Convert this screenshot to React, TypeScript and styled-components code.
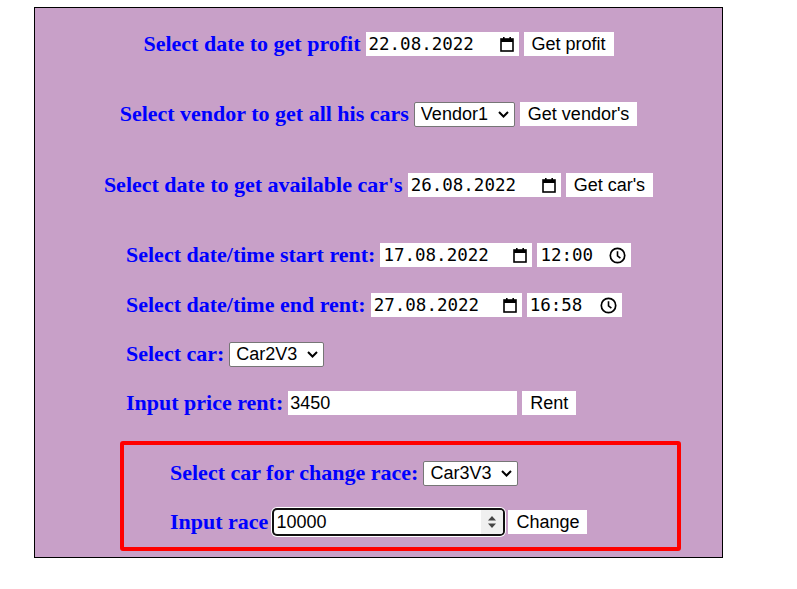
import styled, { createGlobalStyle } from "styled-components";

const GlobalStyle = createGlobalStyle`
  body {
    margin: 0;
    font-family: "Liberation Sans", Arial, sans-serif;
  }
`;

const CalendarIcon = () => (
  <IconSvg width="14" height="16" viewBox="0 0 14 16" fill="none">
    <rect x="1" y="3" width="12" height="12" stroke="#000" strokeWidth="1.6" />
    <rect x="1" y="3" width="12" height="3" fill="#000" />
    <rect x="3" y="1" width="1.6" height="3" fill="#000" />
    <rect x="9.4" y="1" width="1.6" height="3" fill="#000" />
  </IconSvg>
);

const ClockIcon = () => (
  <IconSvg width="17" height="17" viewBox="0 0 17 17" fill="none">
    <circle cx="8.5" cy="8.5" r="7.2" stroke="#000" strokeWidth="1.7" />
    <path d="M8.5 4.2V8.8L11.4 11.2" stroke="#000" strokeWidth="1.6" />
  </IconSvg>
);

const Chevron = () => (
  <svg width="11" height="7" viewBox="0 0 11 7" fill="none">
    <path d="M1 1L5.5 5.5L10 1" stroke="#000" strokeWidth="2" />
  </svg>
);

const SpinArrows = () => (
  <svg width="10" height="14" viewBox="0 0 10 14">
    <path d="M5 1L9 5.5H1Z" fill="#444" />
    <path d="M5 13L9 8.5H1Z" fill="#444" />
  </svg>
);

interface DateFieldProps {
  value: string;
  width: number;
  kind?: "date" | "time";
}

const DateField: React.FC<DateFieldProps> = ({ value, width, kind = "date" }) => (
  <FieldBox $width={width}>
    <MonoInput type="text" defaultValue={value} />
    {kind === "date" ? <CalendarIcon /> : <ClockIcon />}
  </FieldBox>
);

interface SelectProps {
  options: string[];
  width: number;
}

const Select: React.FC<SelectProps> = ({ options, width }) => (
  <SelectWrap $width={width}>
    <NativeSelect defaultValue={options[0]}>
      {options.map((o) => (
        <option key={o}>{o}</option>
      ))}
    </NativeSelect>
    <ChevronSpot>
      <Chevron />
    </ChevronSpot>
  </SelectWrap>
);

const App = () => {
  return (
    <>
      <GlobalStyle />
      <Page>
        <Panel>
          <Row $center>
            <Label>Select date to get profit</Label>
            <DateField value="22.08.2022" width={153} />
            <Button>Get profit</Button>
          </Row>
          <Row $center $space={44}>
            <Label>Select vendor to get all his cars</Label>
            <Select options={["Vendor1", "Vendor2", "Vendor3"]} width={101} />
            <Button>Get vendor's</Button>
          </Row>
          <Row $center $space={45}>
            <Label>Select date to get available car's</Label>
            <DateField value="26.08.2022" width={153} />
            <Button>Get car's</Button>
          </Row>

          <Row $space={44}>
            <Label>Select date/time start rent:</Label>
            <DateField value="17.08.2022" width={152} />
            <DateField value="12:00" width={94} kind="time" />
          </Row>
          <Row $space={24}>
            <Label>Select date/time end rent:</Label>
            <DateField value="27.08.2022" width={151} />
            <DateField value="16:58" width={95} kind="time" />
          </Row>
          <Row $space={23}>
            <Label>Select car:</Label>
            <Select options={["Car2V3", "Car1V1", "Car3V3"]} width={95} />
          </Row>
          <Row $space={23}>
            <Label>Input price rent:</Label>
            <TextInput type="text" defaultValue="3450" $width={229} />
            <Button>Rent</Button>
          </Row>

          <ChangeBox>
            <InnerRow>
              <Label>Select car for change race:</Label>
              <Select options={["Car3V3", "Car1V1", "Car2V3"]} width={95} />
            </InnerRow>
            <InnerRow $space={23}>
              <Label>Input race</Label>
              <NumberWrap>
                <NumberInput type="number" defaultValue={10000} />
                <SpinBox>
                  <SpinArrows />
                </SpinBox>
              </NumberWrap>
              <Button>Change</Button>
            </InnerRow>
          </ChangeBox>
        </Panel>
      </Page>
    </>
  );
};

export default App;

const Page = styled.div`
  padding: 7px 0 0 34px;
`;

const Panel = styled.div`
  width: 687px;
  height: 526px;
  padding-top: 23px;
  border: 1px solid #000;
  background: #c8a0c8;
  display: flex;
  flex-direction: column;
`;

const Row = styled.div<{ $center?: boolean; $space?: number }>`
  display: flex;
  align-items: center;
  gap: 5px;
  height: 26px;
  margin-top: ${(p) => p.$space ?? 0}px;
  justify-content: ${(p) => (p.$center ? "center" : "flex-start")};
  padding-left: ${(p) => (p.$center ? 0 : 91)}px;
`;

const InnerRow = styled.div<{ $space?: number }>`
  display: flex;
  align-items: center;
  gap: 5px;
  height: 26px;
  margin-top: ${(p) => p.$space ?? 0}px;
`;

const Label = styled.span`
  font-family: "Liberation Serif", "Times New Roman", serif;
  font-weight: bold;
  font-size: 22px;
  color: #0000ff;
  white-space: nowrap;
`;

const IconSvg = styled.svg`
  flex-shrink: 0;
`;

const FieldBox = styled.div<{ $width: number }>`
  display: flex;
  align-items: center;
  justify-content: space-between;
  box-sizing: border-box;
  width: ${(p) => p.$width}px;
  height: 24px;
  padding: 0 5px 0 3px;
  background: #fff;
`;

const MonoInput = styled.input`
  flex: 1;
  width: 0;
  min-width: 0;
  border: none;
  outline: none;
  padding: 0;
  background: transparent;
  font-family: "DejaVu Sans Mono", "Liberation Mono", monospace;
  font-size: 17.5px;
  color: #000;
`;

const Button = styled.button`
  height: 24px;
  padding: 0 8px;
  border: none;
  background: #fff;
  font-family: "Liberation Sans", Arial, sans-serif;
  font-size: 18px;
  color: #000;
  white-space: nowrap;
`;

const SelectWrap = styled.div<{ $width: number }>`
  position: relative;
  width: ${(p) => p.$width}px;
  height: 25px;
`;

const NativeSelect = styled.select`
  appearance: none;
  width: 100%;
  height: 100%;
  box-sizing: border-box;
  border: 1px solid #767676;
  border-radius: 2px;
  padding: 0 20px 0 6px;
  background: #fff;
  font-family: "Liberation Sans", Arial, sans-serif;
  font-size: 18px;
  color: #000;
`;

const ChevronSpot = styled.span`
  position: absolute;
  right: 6px;
  top: 9px;
  display: flex;
  pointer-events: none;
`;

const TextInput = styled.input<{ $width: number }>`
  box-sizing: border-box;
  width: ${(p) => p.$width}px;
  height: 24px;
  border: none;
  outline: none;
  padding: 0 2px;
  background: #fff;
  font-family: "Liberation Sans", Arial, sans-serif;
  font-size: 18px;
  color: #000;
`;

const NumberWrap = styled.div`
  position: relative;
  display: flex;
  width: 229px;
  height: 24px;
  margin-left: 1px;
  border-radius: 3px;
  background: #fff;
  box-shadow: 0 0 0 2px #101010, 0 0 0 3px #fff;
  overflow: hidden;
`;

const NumberInput = styled.input`
  flex: 1;
  min-width: 0;
  border: none;
  outline: none;
  padding: 0 24px 0 2px;
  background: transparent;
  font-family: "Liberation Sans", Arial, sans-serif;
  font-size: 18px;
  color: #000;
  appearance: textfield;
  -moz-appearance: textfield;

  &::-webkit-inner-spin-button,
  &::-webkit-outer-spin-button {
    -webkit-appearance: none;
    margin: 0;
  }
`;

const SpinBox = styled.span`
  position: absolute;
  right: 0;
  top: 0;
  bottom: 0;
  width: 22px;
  display: flex;
  align-items: center;
  justify-content: center;
  background: #f0f0f0;
  pointer-events: none;
`;

const ChangeBox = styled.div`
  margin: 25px 0 0 85px;
  width: 507px;
  height: 87px;
  padding: 15px 0 0 46px;
  box-sizing: content-box;
  border: 4px solid #ff0000;
  border-radius: 3px;
  display: flex;
  flex-direction: column;
`;
